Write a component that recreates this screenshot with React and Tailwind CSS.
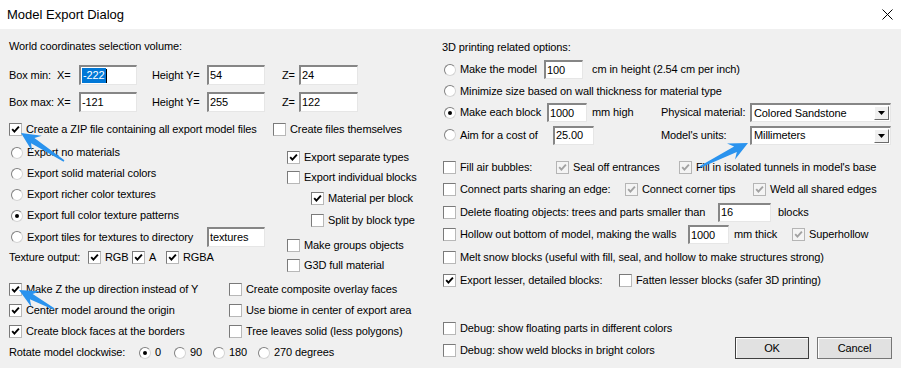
import React from "react";

// classic win32 style controls
const Check = ({ checked, disabled }) => (
  <span
    className={`flex h-[13px] w-[13px] shrink-0 items-center justify-center border ${
      disabled
        ? "border-[#b5b5b5] bg-[#f4f4f4]"
        : "border-[#7a7a7a] border-r-[#b8b8b8] border-b-[#b8b8b8] bg-white"
    }`}
  >
    {checked && (
      <svg width="9" height="9" viewBox="0 0 9 9">
        <path
          d="M1.2 4.2 L3.4 6.6 L7.9 1.6"
          fill="none"
          stroke={disabled ? "#a2a2a2" : "#000"}
          strokeWidth="1.9"
        />
      </svg>
    )}
  </span>
);

const Radio = ({ checked }) => (
  <span className="flex h-[12px] w-[12px] shrink-0 items-center justify-center rounded-full border border-[#808080] border-r-[#d4d4d4] border-b-[#d4d4d4] bg-white">
    {checked && <span className="h-[4px] w-[4px] rounded-full bg-black" />}
  </span>
);

const Opt = ({ radio, checked, disabled, className = "", children }) => (
  <span className={`flex shrink-0 items-center whitespace-nowrap ${className}`}>
    {radio ? (
      <span className="ml-[2px] mr-[4px] flex">
        <Radio checked={checked} />
      </span>
    ) : (
      <span className="mr-[4px] flex">
        <Check checked={checked} disabled={disabled} />
      </span>
    )}
    <span>{children}</span>
  </span>
);

const Field = ({ value, className = "", selected }) => (
  <span
    className={`flex shrink-0 items-center border-t-2 border-l-2 border-r border-b border-t-[#868686] border-l-[#868686] border-r-[#e6e6e6] border-b-[#e6e6e6] bg-white pl-[1px] ${className}`}
  >
    {selected ? (
      <>
        <span className="bg-[#0078d7] px-[1px] py-[2px] text-white">{value}</span>
        <span className="h-[14px] w-[1px] bg-black" />
      </>
    ) : (
      <span>{value}</span>
    )}
  </span>
);

const Select = ({ value }) => (
  <span className="flex h-[19px] w-[141px] shrink-0 items-center justify-between border-t-2 border-l-2 border-r border-b border-t-[#868686] border-l-[#868686] border-r-[#e6e6e6] border-b-[#e6e6e6] bg-white pl-[2px] pr-[1px]">
    <span>{value}</span>
    <span className="flex h-[14px] w-[15px] items-center justify-center border border-white border-r-[#6b6b6b] border-b-[#6b6b6b] bg-[#f0f0f0]">
      <svg width="7" height="4" viewBox="0 0 7 4">
        <path d="M0 0 L7 0 L3.5 4 Z" fill="#000" />
      </svg>
    </span>
  </span>
);

const Row = ({ className = "", children }) => (
  <div className={`flex items-center ${className}`}>{children}</div>
);

function arrow(x1, y1, x2, y2) {
  const dx = x2 - x1;
  const dy = y2 - y1;
  const len = Math.hypot(dx, dy);
  const ux = dx / len;
  const uy = dy / len;
  const px = -uy;
  const py = ux;
  const head = 19;
  const hw = 9;
  const bx = x2 - ux * head;
  const by = y2 - uy * head;
  const nx = x2 - ux * (head - 5);
  const ny = y2 - uy * (head - 5);
  const pts = [
    [x1 + px * 0.8, y1 + py * 0.8],
    [nx + px * 3, ny + py * 3],
    [bx + px * hw, by + py * hw],
    [x2, y2],
    [bx - px * hw, by - py * hw],
    [nx - px * 3, ny - py * 3],
    [x1 - px * 0.8, y1 - py * 0.8],
  ];
  return pts.map((p) => p.map((v) => v.toFixed(1)).join(",")).join(" ");
}

export default function App() {
  return (
    <div className="relative h-[368px] w-[901px] overflow-hidden bg-[#f0f0f0] font-['Liberation_Sans',Arial,sans-serif] text-[11px] leading-none tracking-[-0.1px] text-black">
      {/* title bar */}
      <div className="flex h-[29px] items-center justify-between bg-white pl-[7px] pr-[8px]">
        <span className="text-[13px] tracking-normal">Model Export Dialog</span>
        <svg width="11" height="11" viewBox="0 0 11 11">
          <path d="M0.5 0.5 L10.5 10.5 M10.5 0.5 L0.5 10.5" stroke="#000" strokeWidth="1" />
        </svg>
      </div>

      <div className="flex">
        {/* left half */}
        <div className="w-[442px] shrink-0 pl-[9px]">
          <Row className="mt-[7px] h-[20px]">World coordinates selection volume:</Row>
          <Row className="mt-[9px] h-[20px]">
            <span className="w-[70px] whitespace-pre">Box min:  X=</span>
            <Field value="-222" selected className="h-[20px] w-[58px]" />
            <span className="ml-[15px] w-[55px]">Height Y=</span>
            <Field value="54" className="h-[20px] w-[58px]" />
            <span className="ml-[17px] w-[17px]">Z=</span>
            <Field value="24" className="h-[20px] w-[59px]" />
          </Row>
          <Row className="mt-[7px] h-[20px]">
            <span className="w-[70px] whitespace-pre">Box max: X=</span>
            <Field value="-121" className="h-[20px] w-[58px]" />
            <span className="ml-[15px] w-[55px]">Height Y=</span>
            <Field value="255" className="h-[20px] w-[58px]" />
            <span className="ml-[17px] w-[17px]">Z=</span>
            <Field value="122" className="h-[20px] w-[59px]" />
          </Row>
          <Row className="mt-[7px] h-[20px]">
            <Opt checked className="w-[264px]">Create a ZIP file containing all export model files</Opt>
            <Opt>Create files themselves</Opt>
          </Row>

          <div className="flex h-[140px]">
            <div className="w-[264px] shrink-0 pt-[3px]">
              <Row className="h-[21px]"><Opt radio>Export no materials</Opt></Row>
              <Row className="h-[21px]"><Opt radio>Export solid material colors</Opt></Row>
              <Row className="h-[21px]"><Opt radio>Export richer color textures</Opt></Row>
              <Row className="h-[21px]"><Opt radio checked>Export full color texture patterns</Opt></Row>
              <Row className="h-[22px]">
                <Opt radio className="w-[198px]">Export tiles for textures to directory</Opt>
                <Field value="textures" className="h-[20px] w-[58px]" />
              </Row>
              <Row className="h-[18px]">
                <span className="w-[79px]">Texture output:</span>
                <Opt checked className="w-[44px]">RGB</Opt>
                <Opt checked className="w-[34px]">A</Opt>
                <Opt checked>RGBA</Opt>
              </Row>
            </div>
            <div className="flex-1 pt-[8px]">
              <Row className="h-[20px] pl-[14px]"><Opt checked>Export separate types</Opt></Row>
              <Row className="h-[21px] pl-[14px]"><Opt>Export individual blocks</Opt></Row>
              <Row className="h-[21px] pl-[38px]"><Opt checked>Material per block</Opt></Row>
              <Row className="h-[22px] pl-[38px]"><Opt>Split by block type</Opt></Row>
              <Row className="mt-[4px] h-[20px] pl-[14px]"><Opt>Make groups objects</Opt></Row>
              <Row className="h-[20px] pl-[14px]"><Opt>G3D full material</Opt></Row>
            </div>
          </div>

          <Row className="h-[21px]">
            <Opt checked className="w-[220px]">Make Z the up direction instead of Y</Opt>
            <Opt>Create composite overlay faces</Opt>
          </Row>
          <Row className="h-[21px]">
            <Opt checked className="w-[220px]">Center model around the origin</Opt>
            <Opt>Use biome in center of export area</Opt>
          </Row>
          <Row className="h-[21px]">
            <Opt checked className="w-[220px]">Create block faces at the borders</Opt>
            <Opt>Tree leaves solid (less polygons)</Opt>
          </Row>
          <Row className="h-[21px]">
            <span className="w-[128px]">Rotate model clockwise:</span>
            <Opt radio checked className="w-[35px]">0</Opt>
            <Opt radio className="w-[39px]">90</Opt>
            <Opt radio className="w-[45px]">180</Opt>
            <Opt radio>270 degrees</Opt>
          </Row>
        </div>

        {/* right half */}
        <div className="flex-1">
          <Row className="mt-[8px] h-[20px]">3D printing related options:</Row>
          <Row className="mt-[2px] h-[21px]">
            <Opt radio className="w-[102px]">Make the model</Opt>
            <Field value="100" className="h-[19px] w-[39px]" />
            <span className="ml-[9px]">cm in height (2.54 cm per inch)</span>
          </Row>
          <Row className="h-[22px]">
            <Opt radio>Minimize size based on wall thickness for material type</Opt>
          </Row>
          <Row className="h-[21px]">
            <Opt radio checked className="w-[105px]">Make each block</Opt>
            <Field value="1000" className="h-[19px] w-[40px]" />
            <span className="ml-[5px] w-[69px]">mm high</span>
            <span className="w-[89px]">Physical material:</span>
            <Select value="Colored Sandstone" />
          </Row>
          <Row className="h-[24px]">
            <Opt radio className="w-[111px]">Aim for a cost of</Opt>
            <Field value="25.00" className="h-[19px] w-[41px]" />
            <span className="w-[67px]" />
            <span className="w-[89px]">Model's units:</span>
            <Select value="Millimeters" />
          </Row>

          <div className="mt-[9px] pl-[1px]">
            <Row className="h-[22px]">
              <Opt className="w-[113px]">Fill air bubbles:</Opt>
              <Opt checked disabled className="w-[123px]">Seal off entrances</Opt>
              <Opt checked disabled>Fill in isolated tunnels in model's base</Opt>
            </Row>
            <Row className="h-[23px]">
              <Opt className="w-[182px]">Connect parts sharing an edge:</Opt>
              <Opt checked disabled className="w-[128px]">Connect corner tips</Opt>
              <Opt checked disabled>Weld all shared edges</Opt>
            </Row>
            <Row className="h-[22px]">
              <Opt className="w-[275px]">Delete floating objects: trees and parts smaller than</Opt>
              <Field value="16" className="h-[19px] w-[53px]" />
              <span className="ml-[7px]">blocks</span>
            </Row>
            <Row className="h-[23px]">
              <Opt className="w-[245px]">Hollow out bottom of model, making the walls</Opt>
              <Field value="1000" className="h-[19px] w-[41px]" />
              <span className="ml-[5px] w-[58px]">mm thick</span>
              <Opt checked disabled>Superhollow</Opt>
            </Row>
            <Row className="h-[22px]">
              <Opt>Melt snow blocks (useful with fill, seal, and hollow to make structures strong)</Opt>
            </Row>
            <Row className="h-[24px]">
              <Opt checked className="w-[176px]">Export lesser, detailed blocks:</Opt>
              <Opt>Fatten lesser blocks (safer 3D printing)</Opt>
            </Row>

            <div className="mt-[25px] flex">
              <div className="w-[292px] shrink-0">
                <Row className="h-[22px]"><Opt>Debug: show floating parts in different colors</Opt></Row>
                <Row className="h-[23px]"><Opt>Debug: show weld blocks in bright colors</Opt></Row>
              </div>
              <div className="mt-[20px] flex gap-[8px]">
                <button className="flex h-[22px] w-[74px] items-center justify-center border border-[#3f3f3f] bg-[#e1e1e1] shadow-[inset_1px_1px_0_#fff]">
                  OK
                </button>
                <button className="flex h-[22px] w-[75px] items-center justify-center border border-[#767676] bg-[#e1e1e1] shadow-[inset_1px_1px_0_#fff]">
                  Cancel
                </button>
              </div>
            </div>
          </div>
        </div>
      </div>

      {/* annotation arrows */}
      <svg className="pointer-events-none absolute inset-0" width="901" height="368">
        <polygon points={arrow(64, 161, 21, 133)} fill="#2a93ee" />
        <polygon points={arrow(54, 309, 19, 290)} fill="#2a93ee" />
        <polygon points={arrow(700, 167, 748, 143)} fill="#2a93ee" />
      </svg>
    </div>
  );
}
